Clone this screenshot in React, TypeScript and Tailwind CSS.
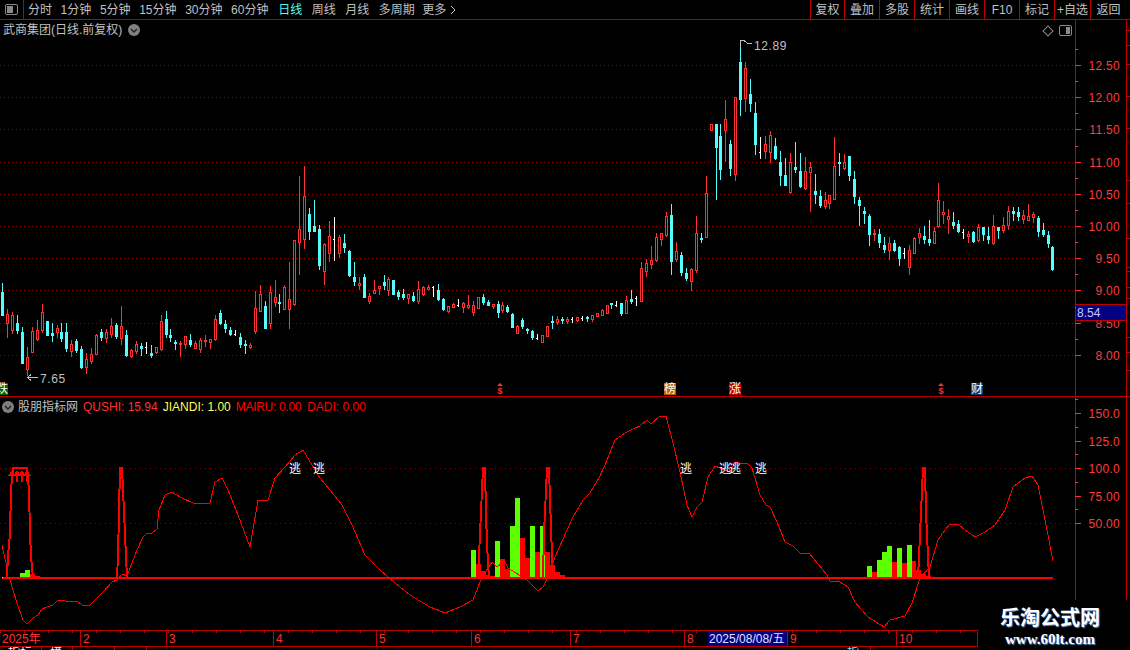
import React from 'react';

type Candle = [string, number, number, number, number];

const raw = `c,283,292,315,315 r,309,314,323,337 r,312,315,330,333 c,315,323,330,333 c,327,332,363,363 r,347,357,369,375 r,327,331,352,352 r,320,330,339,340 r,304,312,330,332 c,321,321,335,335
c,323,333,335,341 r,325,328,332,337 c,323,332,338,341 c,323,332,348,351 r,340,344,351,356 c,339,341,350,352 c,346,349,367,368 r,353,359,367,373 r,348,354,361,363 r,334,335,354,354
c,329,332,337,340 r,329,332,338,342 r,318,326,334,337 c,323,325,336,338 r,306,326,338,344 c,330,335,355,356 r,349,350,356,357 r,341,344,351,353 c,343,346,348,355 w,342,347,347,353
c,345,353,355,357 r,347,347,352,353 r,315,321,349,350 c,311,319,334,337 c,329,335,337,341 c,340,342,343,349 r,341,343,344,356 r,336,336,344,348 c,334,340,344,346 r,341,343,348,348
r,338,340,349,352 r,335,340,341,346 r,339,339,342,348 r,315,319,339,340 c,310,313,323,324 c,320,324,328,332 c,327,330,334,335 w,330,334,334,335 c,333,337,344,347 c,340,344,345,353
r,343,345,347,348 r,291,308,331,333 r,285,294,311,311 c,301,306,328,328 r,286,292,323,328 r,280,297,302,306 c,294,302,303,312 r,285,287,309,309 r,262,299,309,328 r,240,240,304,305
r,176,229,242,274 r,166,196,239,248 c,208,214,231,239 c,200,226,231,231 c,225,229,265,269 r,243,244,271,284 r,221,236,253,261 w,217,239,239,260 r,235,237,253,257 c,234,243,247,252
c,250,251,275,276 c,262,277,281,285 r,277,283,285,289 c,274,277,297,297 r,293,296,301,303 r,280,290,293,293 r,286,286,288,294 c,275,282,285,289 r,277,279,290,295 c,280,280,294,294
c,290,292,296,299 c,289,294,297,299 r,294,294,298,303 c,292,296,300,301 r,281,289,301,303 r,286,287,294,295 r,285,287,289,289 w,286,287,287,296 c,284,290,299,300 c,298,299,309,310
r,306,306,311,312 r,303,304,307,307 w,299,305,305,306 r,302,303,307,312 r,295,305,307,308 r,301,305,312,315 r,297,297,308,308 c,294,297,302,304 c,300,302,305,305 r,304,304,306,308
c,301,304,312,317 r,302,305,310,312 c,305,307,311,312 c,313,314,327,327 r,325,326,333,333 c,318,320,326,328 c,328,329,330,333 c,330,331,337,339 w,334,338,338,339 r,335,335,342,342
r,326,326,336,336 c,316,321,322,328 r,316,319,322,324 c,317,319,320,323 r,317,319,321,323 w,317,319,319,322 r,317,317,320,321 w,316,318,318,320 c,316,317,318,321 r,315,315,319,321
r,313,313,316,316 r,309,310,315,315 r,305,305,313,313 c,303,303,304,308 w,301,305,305,306 c,303,303,313,315 r,296,300,313,313 c,290,299,301,303 w,296,298,298,305 r,262,268,301,301
r,259,263,271,276 r,246,260,264,268 r,233,237,260,261 r,233,233,239,245 r,212,216,235,236 c,204,215,261,274 r,242,251,259,261 c,252,255,272,275 c,268,273,278,280 r,268,269,281,290
r,216,233,270,272 c,233,238,239,242 r,176,193,237,237 r,124,124,130,130 c,124,124,147,199 c,124,136,169,179 r,100,119,130,161 c,140,144,168,175 r,97,97,174,180 c,40,62,99,115
r,62,68,98,111 c,79,94,103,111 c,102,113,144,154 w,137,152,152,158 r,136,144,151,158 r,131,135,152,162 c,138,146,158,159 c,151,162,175,185 c,158,175,185,185 r,153,162,192,193
c,142,167,169,172 c,153,171,186,187 r,157,171,188,189 r,162,167,172,211 c,174,191,194,203 c,190,196,205,207 r,192,200,206,208 r,195,195,203,208 r,137,166,199,199 c,153,162,163,175
r,154,162,168,169 c,156,156,175,180 c,171,179,196,203 c,197,200,205,225 c,207,211,213,223 c,214,216,234,245 r,229,233,234,240 c,229,234,242,247 c,237,245,249,252 r,237,243,250,259
c,240,243,250,251 c,246,247,258,265 w,248,253,253,258 r,245,250,267,274 r,237,238,253,253 r,228,233,237,243 c,226,236,239,243 c,220,239,242,245 r,227,231,243,243 r,183,200,226,227
r,201,212,214,223 r,209,216,219,233 c,212,222,225,228 c,220,224,231,232 w,229,232,232,238 r,231,234,236,242 c,231,232,241,242 r,224,227,240,241 c,227,227,234,240 c,227,236,239,243
r,215,226,243,244 c,227,227,230,238 r,217,225,230,232 r,206,211,225,229 c,207,211,213,220 c,207,212,216,220 r,210,215,219,223 r,204,216,220,220 r,212,214,217,222 c,216,218,231,236
c,223,230,234,236 c,231,235,243,247 c,246,247,269,270`;

const candles: Candle[] = raw
  .split(/\s+/)
  .map((s) => {
    const p = s.split(',');
    return [p[0], +p[1], +p[2], +p[3], +p[4]] as Candle;
  });

const RED = '#ff3232';
const CYAN = '#54fcfc';

const topGrid = [65, 97, 129, 162, 194, 226, 258, 290, 323, 355];
const topAxis = [
  ['12.50', 65], ['12.00', 97], ['11.50', 129], ['11.00', 162], ['10.50', 194],
  ['10.00', 226], ['9.50', 258], ['9.00', 290], ['8.50', 323], ['8.00', 355],
] as const;
const lowAxis = [['150.0', 413], ['125.0', 441], ['100.0', 468], ['75.00', 496], ['50.00', 523]] as const;

const curve = `2,545 6,563 8,577 10,580 17,603 23,620 27,624 33,618 38,615 42,609 47,607 53,605 57,601 62,600 65,601 77,601 82,605 90,605 95,600 103,592 112,582 117,580 122,574 127,576 132,563 137,550 143,537 147,533 152,533 157,529 159,510 165,495 172,492 180,497 195,504 210,503 215,482 222,478 228,490 238,515 250,547 258,500 268,500 275,478 285,467 295,455 303,450 312,465 320,478 330,490 342,505 352,525 365,555 380,570 395,583 410,595 430,607 445,613 460,607 473,600 480,582 483,575 488,568 492,562 497,567 502,563 505,562 508,568 527,580 538,591 543,587 550,573 555,557 567,530 573,517 583,500 590,493 599,478 605,465 615,440 625,433 635,428 640,426 647,420 651,424 660,416 666,416 673,443 680,472 687,505 692,517 697,507 702,502 708,477 715,466 720,468 730,472 735,462 742,464 747,463 752,468 760,495 766,505 770,507 777,522 785,542 793,546 800,553 809,553 827,575 830,581 840,582 848,587 855,602 868,617 884,627 890,620 905,616 912,603 920,578 930,567 938,540 945,530 950,524 958,524 965,530 975,537 985,532 995,525 1005,510 1013,487 1025,478 1032,476 1038,485 1047,530 1053,561`;

const spikes = [
  '7,578 8,556 10,533 11,490 13,468 27,468 29,490 30,533 31,556 33,578',
  '117,578 118,556 119,512 120,468 122,468 124,512 126,556 127,578',
  '478,578 479,556 481,512 482,490 483,468 485,468 486,512 487,545 489,578',
  '543,578 544,533 546,490 547,468 549,468 550,500 552,556 553,578',
  '918,578 920,535 922,490 923,468 925,468 926,512 928,556 929,578',
];

const GREEN = '#5cff00';
// [left, right, top, colour]
const bars: [number, number, number, string][] = [
  [20, 25, 573, GREEN], [25, 30, 570, GREEN], [30, 35, 574, '#f00'], [35, 40, 576, '#f00'],
  [471, 476, 550, GREEN], [476, 481, 564, '#f00'], [481, 486, 571, '#f00'], [486, 490, 575, '#f00'], [490, 495, 576, '#f00'],
  [495, 500, 541, GREEN], [500, 505, 559, '#f00'], [505, 510, 569, '#f00'], [510, 515, 526, GREEN], [515, 520, 498, GREEN],
  [520, 525, 538, '#f00'], [525, 530, 558, '#f00'], [530, 535, 526, GREEN], [535, 540, 552, '#f00'], [540, 545, 526, GREEN],
  [545, 550, 552, '#f00'], [550, 555, 565, '#f00'], [555, 560, 572, '#f00'], [560, 565, 575, '#f00'],
  [867, 872, 566, GREEN], [872, 877, 572, '#f00'], [877, 882, 560, GREEN], [882, 887, 552, GREEN], [887, 892, 546, GREEN],
  [892, 897, 562, '#f00'], [897, 902, 548, GREEN], [902, 907, 563, '#f00'], [907, 912, 545, GREEN], [912, 916, 561, '#f00'],
  [916, 921, 570, '#f00'], [921, 926, 574, '#f00'], [926, 931, 576, '#f00'],
];

const escapes = [295, 319, 686, 725, 735, 761];

const markers = [
  { x: -4, label: '跌', bg: '#006400', fg: '#fff' },
  { x: 664, label: '榜', bg: '#b85c00', fg: '#fff' },
  { x: 729, label: '涨', bg: '#c00000', fg: '#fff' },
  { x: 971, label: '财', bg: '#0b3d73', fg: '#fff' },
];

const toolsA = ['分时', '1分钟', '5分钟', '15分钟', '30分钟', '60分钟'];
const toolsB = ['日线', '周线', '月线', '多周期'];
const rightTools = [
  { t: '复权', w: 'w-[34px]' },
  { t: '叠加', w: 'w-[35px]' },
  { t: '多股', w: 'w-[35px]' },
  { t: '统计', w: 'w-[35px]' },
  { t: '画线', w: 'w-[35px]' },
  { t: 'F10', w: 'w-[35px]' },
  { t: '标记', w: 'w-[35px]' },
  { t: '+自选', w: 'w-[36px]' },
  { t: '返回', w: 'w-[36px]' },
];
const months = [
  { label: '2025年', w: 'w-[81px]' },
  { label: '2', w: 'w-[86px]' },
  { label: '3', w: 'w-[107px]' },
  { label: '4', w: 'w-[103px]' },
  { label: '5', w: 'w-[95px]' },
  { label: '6', w: 'w-[99px]' },
  { label: '7', w: 'w-[114px]' },
  { label: '8', w: 'w-[103px]', date: '2025/08/08/五' },
  { label: '9', w: 'w-[109px]' },
  { label: '10', w: 'w-[81px]' },
];
const railTicks = [30, 45, 64, 96, 128, 180, 203, 238, 267, 271, 287, 298, 337, 352, 370];

const Toggle = ({ side }: { side: 'left' | 'right' }) => (
  <span className="flex h-[11px] w-[13px] rounded-[2px] border border-[#8a8a8a] p-px">
    {side === 'left' ? <span className="h-full w-[6px] bg-[#8a8a8a]" /> : <span className="ml-auto h-full w-[4px] bg-[#8a8a8a]" />}
  </span>
);

const DropDot = () => (
  <span className="flex h-3 w-3 items-center justify-center rounded-full bg-[#808080]">
    <svg width="8" height="5" viewBox="0 0 8 5" fill="none" stroke="#202020" strokeWidth="1.4">
      <polyline points="1,1 4,4 7,1" />
    </svg>
  </span>
);

const Candles = () => (
  <g shapeRendering="crispEdges">
    {candles.map(([t, high, top, bot, low], i) => {
      const x = Math.floor(2.5 + 4.955 * i);
      if (t === 'w') {
        return (
          <g key={i} fill="#fff">
            <rect x={x} y={high} width={1} height={low - high + 1} />
            <rect x={x - 1} y={top} width={1} height={1} />
          </g>
        );
      }
      const colour = t === 'r' ? RED : CYAN;
      return (
        <g key={i} fill={colour}>
          <rect x={x} y={high} width={1} height={top - high + 1} />
          <rect x={x} y={bot} width={1} height={low - bot + 1} />
          <rect x={x - 1} y={top} width={3} height={bot - top + 1} />
          {t === 'r' && bot - top > 1 && <rect x={x} y={top + 1} width={1} height={bot - top - 1} fill="#000" />}
        </g>
      );
    })}
  </g>
);

const DotLine = ({ y, id }: { y: number; id: string }) => (
  <rect x={0} y={y} width={1075} height={1} fill={`url(#${id})`} shapeRendering="crispEdges" />
);

const AxisTicks = ({ items, from, to }: { items: readonly (readonly [string, number])[]; from: number; to: number }) => {
  const step = items[1][1] - items[0][1];
  return (
    <g>
      <g shapeRendering="crispEdges" fill="#ff3232">
        {items.map(([, y]) => (
          <rect key={y} x={1075} y={y} width={6} height={1} />
        ))}
        {items.map(([, y]) =>
          y + step / 2 < to && y - step / 2 > from ? <rect key={y} x={1075} y={Math.round(y - step / 2)} width={3} height={1} /> : null,
        )}
      </g>
      {items.map(([label, y]) => (
        <text key={label} x={1120} y={y + 5} textAnchor="end" fontSize={12} letterSpacing={0.3} fill="#ff3c3c">
          {label}
        </text>
      ))}
    </g>
  );
};

export default function App() {
  return (
    <div className="relative flex h-[650px] w-[1130px] flex-col overflow-hidden bg-black font-['Liberation_Sans','Noto_Sans_CJK_SC',sans-serif] text-xs text-[#c0c0c0]">
      {/* toolbar */}
      <div className="flex h-5 shrink-0 border-b border-[#c00000]">
        <div className="flex w-6 items-center justify-center border-r border-[#c00000] pr-px">
          <Toggle side="left" />
        </div>
        <div className="flex flex-1 items-center pl-1">
          <div className="flex gap-[8.6px]">
            {toolsA.map((t) => (
              <span key={t}>{t}</span>
            ))}
          </div>
          <div className="ml-[9.7px] flex gap-[9.5px]">
            {toolsB.map((t) => (
              <span key={t} className={t === '日线' ? 'text-[#54fcfc]' : ''}>
                {t}
              </span>
            ))}
          </div>
          <span className="ml-[7.5px] flex items-center gap-1">
            更多
            <svg width="6" height="10" viewBox="0 0 6 10" fill="none" stroke="#c0c0c0">
              <polyline points="1,1 5,5 1,9" />
            </svg>
          </span>
        </div>
        <div className="flex">
          {rightTools.map(({ t, w }) => (
            <span key={t} className={`${w} flex items-center justify-center border-l border-[#c00000]`}>
              {t}
            </span>
          ))}
          <span className="w-[4px]" />
        </div>
      </div>

      {/* price panel */}
      <div className="flex h-[377px] shrink-0 border-b border-[#c00000]">
        <div className="relative w-[1075px]">
          <svg width="1075" height="376" viewBox="0 20 1075 376" className="block">
            <defs>
              <pattern id="dotTop" width="4" height="1" patternUnits="userSpaceOnUse">
                <rect width="1" height="1" fill="#8c0000" />
              </pattern>
            </defs>
            {topGrid.map((y) => (
              <DotLine key={y} y={y} id="dotTop" />
            ))}
            <Candles />
            <g fill="none" stroke="#c0c0c0" shapeRendering="crispEdges">
              <polyline points="740.5,48 740.5,40.5 744,40.5 747,43 752,44" />
              <polyline points="38,377.5 27.5,377.5 31,374.5" />
              <polyline points="27.5,377.5 31,380.5" />
            </g>
            <text x={754} y={50} fontSize={12} letterSpacing={0.6} fill="#c0c0c0">12.89</text>
            <text x={40} y={383} fontSize={12} letterSpacing={0.6} fill="#c0c0c0">7.65</text>
            {markers.map((m) => (
              <g key={m.label}>
                <rect x={m.x} y={383} width={12} height={12} fill={m.bg} shapeRendering="crispEdges" />
                <text x={m.x} y={393} fontSize={12} fill={m.fg}>{m.label}</text>
              </g>
            ))}
            {[500, 941].map((x) => (
              <g key={x}>
                <polygon points={`${x},383 ${x + 3},386 ${x - 3},386`} fill={RED} />
                <text x={x} y={394} fontSize={9} fontWeight={700} textAnchor="middle" fill={RED}>$</text>
              </g>
            ))}
          </svg>
          <div className="absolute left-[3px] top-[2px] flex items-center gap-1.5">
            武商集团(日线.前复权)
            <DropDot />
          </div>
          <div className="absolute right-[3px] top-[5px] flex items-center gap-[7px]">
            <span className="h-2 w-2 rotate-45 border border-[#8a8a8a]" />
            <Toggle side="right" />
          </div>
        </div>
        <div className="relative w-[51px] border-l border-[#c00000]">
          <svg width="50" height="376" viewBox="1076 20 50 376" className="block overflow-visible">
            <AxisTicks items={topAxis} from={20} to={396} />
          </svg>
          <div className="absolute left-0 top-[284px] flex h-[17px] w-full items-center border-y border-[#c00000] bg-[#000080] pl-px text-[#c8c8ff]">
            8.54
          </div>
        </div>
        <div className="relative flex-1 border-l border-[#c00000]">
          {railTicks.map((y) => (
            <span key={y} className="absolute left-0 h-px w-full bg-[#c00000]" style={{ top: y - 20 }} />
          ))}
        </div>
      </div>

      {/* indicator panel */}
      <div className="flex h-[233px] shrink-0">
        <div className="relative w-[1075px]">
          <svg width="1075" height="233" viewBox="0 397 1075 233" className="block">
            <defs>
              <pattern id="dotLow" width="5" height="1" patternUnits="userSpaceOnUse">
                <rect width="1" height="1" fill="#8c0000" />
              </pattern>
            </defs>
            <DotLine y={468} id="dotLow" />
            <DotLine y={523} id="dotLow" />
            <g shapeRendering="crispEdges">
              {bars.map(([l, r, top, c]) => (
                <rect key={l} x={l} y={top} width={r - l} height={578 - top} fill={c} />
              ))}
              <polyline points={curve} fill="none" stroke="#ff0000" strokeWidth={1} />
              {spikes.map((s) => (
                <polyline key={s} points={s} fill="none" stroke="#ff0000" strokeWidth={2} />
              ))}
              <rect x={2} y={577} width={1051} height={2} fill="#ff0000" />
              <rect x={2} y={577} width={1} height={1} fill="#ffff00" />
            </g>
            {[12, 17, 22, 27].map((x) => (
              <g key={x} fill="#ff0000" shapeRendering="crispEdges">
                <polygon points={`${x},470 ${x + 4},476 ${x - 4},476`} />
                <rect x={x - 1} y={476} width={2} height={6} />
              </g>
            ))}
            {escapes.map((x) => (
              <text key={x} x={x} y={473} fontSize={12} textAnchor="middle" fill="#fff">逃</text>
            ))}
          </svg>
          <div className="absolute left-[2px] top-[2px] flex items-center">
            <DropDot />
            <span className="ml-1">股朋指标网</span>
            <span className="ml-[5px] text-[#ff3232]">QUSHI: 15.94</span>
            <span className="ml-[5px] text-[#ffff54]">JIANDI: 1.00</span>
            <span className="ml-[5px] tracking-[-0.3px] text-[#ff0000]">MAIRU: 0.00</span>
            <span className="ml-[6px] text-[#ff0000]">DADI: 0.00</span>
          </div>
        </div>
        <div className="w-[51px] border-l border-[#c00000]">
          <svg width="50" height="233" viewBox="1076 397 50 233" className="block overflow-visible">
            <AxisTicks items={lowAxis} from={397} to={630} />
          </svg>
        </div>
        <div className="flex-1 border-l border-[#c00000]" />
      </div>

      {/* date axis */}
      <div className="flex h-[17px] w-[978px] shrink-0 border-y border-[#c00000] bg-[repeating-linear-gradient(90deg,#c00000_0,#c00000_1px,transparent_1px,transparent_24px)] bg-[length:100%_2px] bg-no-repeat leading-none text-[#ff3232]">
        {months.map((m) => (
          <div key={m.label} className={`${m.w} flex items-center justify-between border-r border-[#c00000] pl-[2px]`}>
            {m.label}
            {m.date && <span className="flex h-full w-[79px] items-center whitespace-nowrap bg-[#000080] pl-px text-[#e0e0ff]">{m.date}</span>}
          </div>
        ))}
      </div>

      {/* tabs, cut by the window */}
      <div className="flex h-[3px] shrink-0 overflow-hidden leading-3">
        <span className="w-[42px] border-r border-[#c00000] pl-2 text-white">指标</span>
        <span className="w-[31px] border-r border-[#c00000] pl-2 text-white">模板</span>
        <span className="w-[42px] border-r border-[#c00000]" />
        <span className="w-[32px] border-r border-[#c00000]" />
        <span className="w-[700px]" />
        <span className="w-[24px] border-r border-[#c00000] text-[#54fcfc]">指标</span>
      </div>

      {/* watermark logo */}
      <div className="absolute bottom-0 right-0 flex h-[50px] w-[152px] flex-col items-center bg-black pr-2 pt-2">
        <span className="text-[20px] font-bold leading-5 text-white [text-shadow:1px_1px_1px_#5a8ac8]">乐淘公式网</span>
        <span className="mt-[4px] font-['Liberation_Serif',serif] text-[15px] font-bold leading-[14px] text-white [text-shadow:1px_1px_1px_#5a8ac8]">www.60lt.com</span>
      </div>
    </div>
  );
}
